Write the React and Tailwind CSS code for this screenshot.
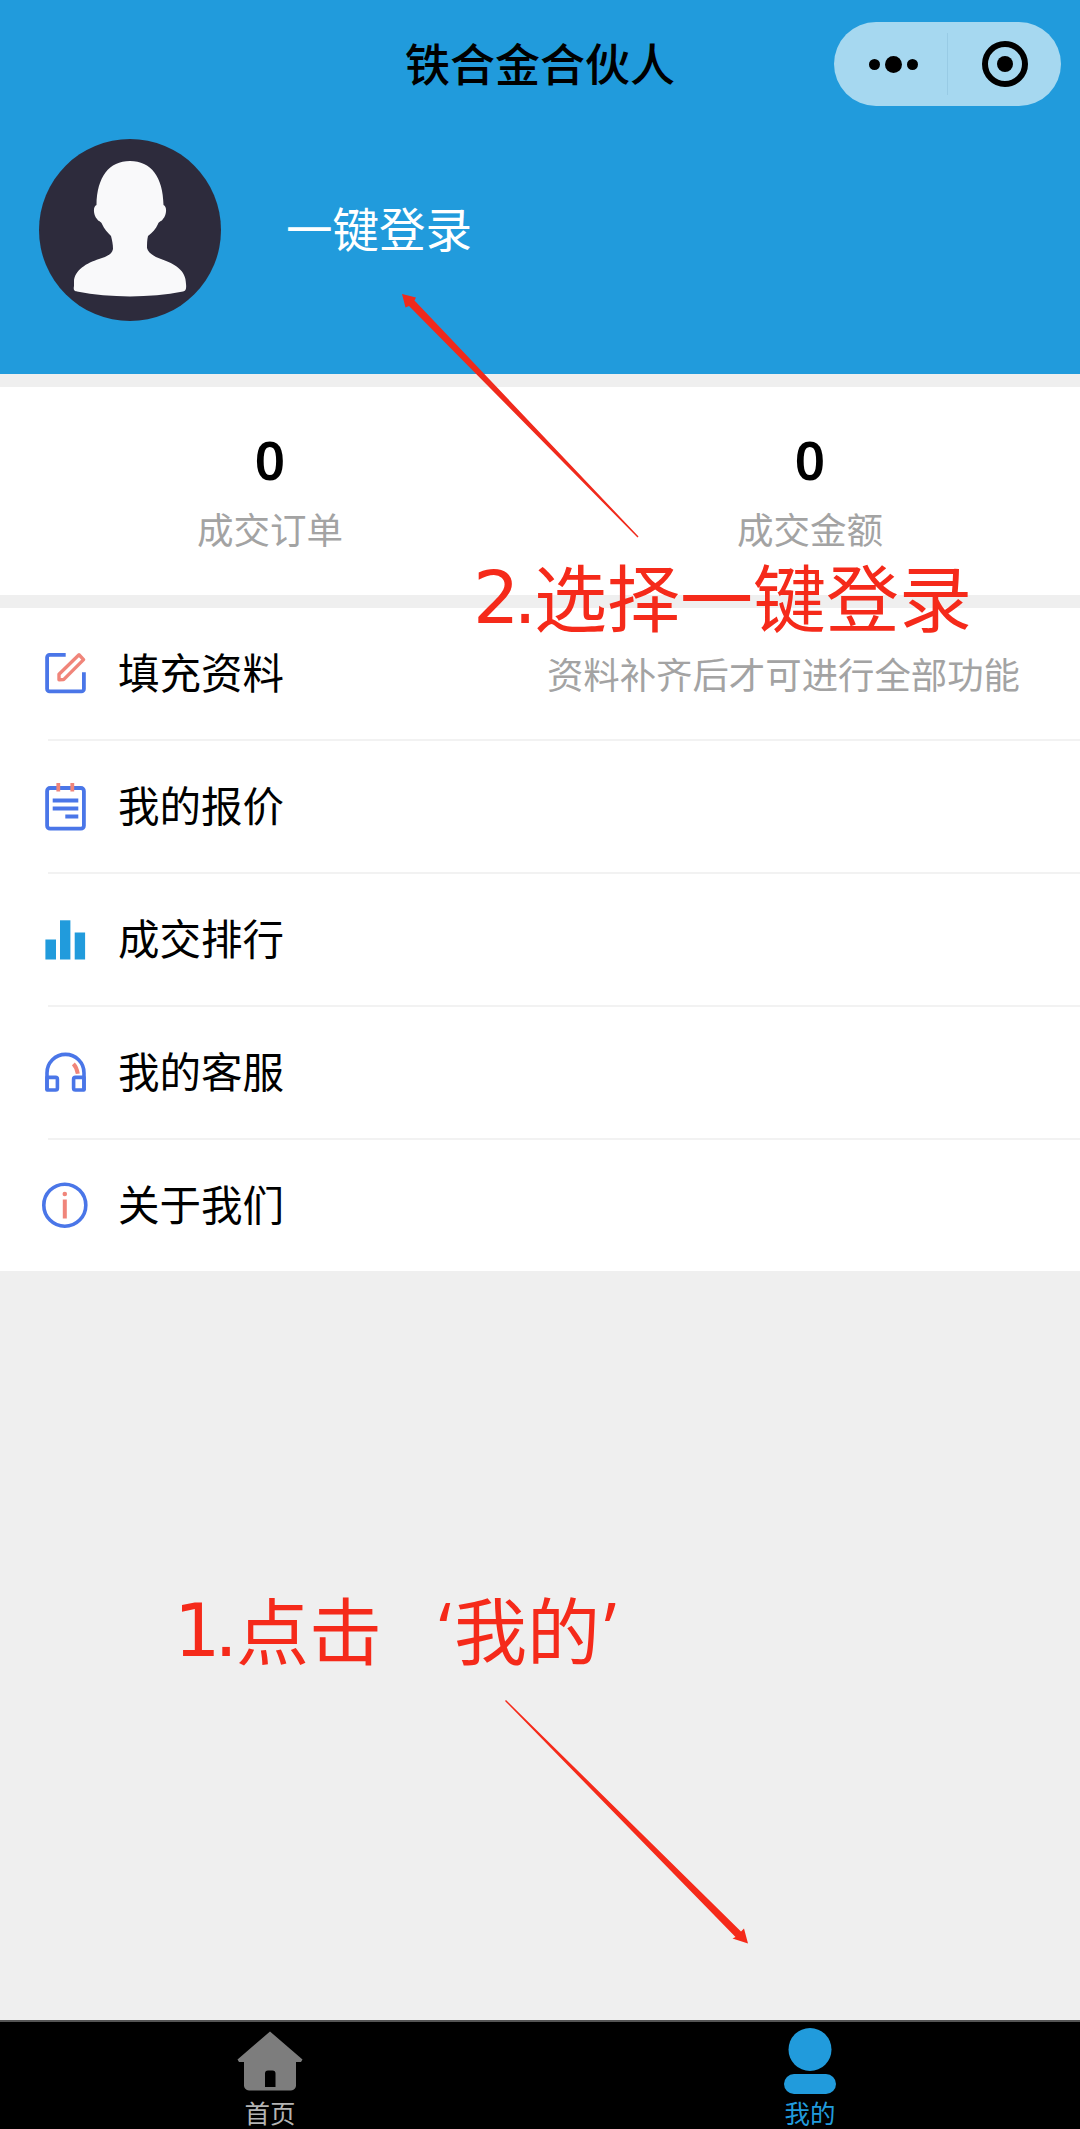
const stats = [
  { label: "成交订单", value: 0 },
  { label: "成交金额", value: 0 },
];

const BLUE = "#4a76e8";
const CORAL = "#f0857a";

function EditIcon() {
  return (
    <svg width="48" height="48" viewBox="0 0 48 48" fill="none" strokeWidth="3.8" strokeLinejoin="round">
      <path d="M24.7 4.8H8.6a2.5 2.5 0 0 0-2.5 2.5v31.6a2.5 2.5 0 0 0 2.5 2.5h31.8a2.5 2.5 0 0 0 2.5-2.5V22.2" stroke={BLUE} />
      <path d="M18 29.7v-5.4L38 4.8l4.6 4.8-20 20z" stroke={CORAL} strokeWidth="3.4" />
    </svg>
  );
}

function QuoteIcon() {
  return (
    <svg width="48" height="48" viewBox="0 0 48 48" fill="none" strokeWidth="3.8">
      <rect x="6.1" y="5" width="36.8" height="40.7" rx="3" stroke={BLUE} />
      <path d="M11.7 17.5h25.6M11.7 25.5h25.6M24.3 33.5h13" stroke={BLUE} />
      <path d="M17.3 0v8.5M31.3 0v8.5" stroke={CORAL} />
    </svg>
  );
}

function RankIcon() {
  return (
    <svg width="48" height="48" viewBox="0 0 48 48" fill="#219bdc">
      <rect x="4.4" y="23.5" width="10.6" height="20" />
      <rect x="19" y="4.3" width="10.4" height="39.2" />
      <rect x="33.7" y="16.5" width="10.4" height="27" />
    </svg>
  );
}

function ServiceIcon() {
  return (
    <svg width="48" height="48" viewBox="0 0 48 48" fill="none" strokeWidth="3.6" strokeLinejoin="round">
      <path d="M6 41V23.9a18.5 18.5 0 0 1 37 0V41" stroke={BLUE} />
      <path d="M6 28.4h8.6a1.8 1.8 0 0 1 1.8 1.8v9a1.8 1.8 0 0 1-1.8 1.8H6z" stroke={BLUE} />
      <path d="M43 28.4h-8.6a1.8 1.8 0 0 0-1.8 1.8v9a1.8 1.8 0 0 0 1.8 1.8H43z" stroke={BLUE} />
      <path d="M32.4 14.8q3.4 3.6 4.4 10" stroke={CORAL} strokeWidth="4" />
    </svg>
  );
}

function InfoIcon() {
  return (
    <svg width="48" height="48" viewBox="0 0 48 48" fill="none">
      <circle cx="23.8" cy="23.2" r="21" stroke={BLUE} strokeWidth="3.6" />
      <circle cx="23.8" cy="12" r="2.3" fill={CORAL} />
      <path d="M23.8 17.5v19" stroke={CORAL} strokeWidth="4" />
    </svg>
  );
}

const menu = [
  { label: "填充资料", Icon: EditIcon, hint: "资料补齐后才可进行全部功能" },
  { label: "我的报价", Icon: QuoteIcon },
  { label: "成交排行", Icon: RankIcon },
  { label: "我的客服", Icon: ServiceIcon },
  { label: "关于我们", Icon: InfoIcon },
];

function Capsule() {
  return (
    <div className="absolute left-[834px] top-[22px] flex h-[84px] w-[227px] items-center rounded-full bg-[#a6d8f0]">
      <div className="flex w-[113px] items-center justify-center gap-[5px] pl-[6px]">
        <span className="h-[11px] w-[11px] rounded-full bg-black" />
        <span className="h-[17px] w-[17px] rounded-full bg-black" />
        <span className="h-[11px] w-[11px] rounded-full bg-black" />
      </div>
      <div className="h-[62px] w-[1px] bg-[#98cbe5]" />
      <div className="flex flex-1 justify-center">
        <div className="flex h-[46px] w-[46px] items-center justify-center rounded-full border-[6px] border-black">
          <span className="h-4 w-4 rounded-full bg-black" />
        </div>
      </div>
    </div>
  );
}

function Avatar() {
  return (
    <svg width="182" height="182" viewBox="0 0 182 182">
      <circle cx="91" cy="91" r="91" fill="#2d2b3c" />
      <path
        d="M91 22C70 22 58 38 57.500 66C54 67 54 76 58 80C60 83 62 82 63 85C65 90 69 94 72 97C73 101 74 105 74 110C73 116 66 118 60 120C48 124 35 131 35 143V147C34 152 36 152 38 152.500C72 159 110 159 144 152.500C147 152 147.500 149 147 145C147 131 136 125 122 120C116 118 109 114 108 109C108 105 108 101 109 97C113 94 117 90 119 85C120 82 122 83 124 80C128 76 128 67 124.500 66C124 38 112 22 91 22Z"
        fill="#f9f9fa"
      />
    </svg>
  );
}

/* ---------------- TAB ICONS ---------------- */

function HomeIcon() {
  return (
    <svg width="66" height="60" viewBox="0 0 66 60" fill="#7d7d7d">
      <path
        fillRule="evenodd"
        d="M33 0.500 65.500 28.500 64 31H59V54a5 5 0 0 1-5 5.500H12a5 5 0 0 1-5-5.500V31H2L.5 28.500ZM31 39.500a3 3 0 0 0-3 3V56H38.500V42.500a3 3 0 0 0-3-3Z"
      />
    </svg>
  );
}

function MineIcon() {
  return (
    <svg width="54" height="67" viewBox="0 0 54 67" fill="#219bdc">
      <circle cx="27" cy="21.500" r="21.500" />
      <rect x="1" y="46" width="52" height="20" rx="10" />
    </svg>
  );
}

export default function App() {
  return (
    <div className="relative flex h-[2129px] w-[1080px] flex-col overflow-hidden bg-[#efefef] font-['Noto_Sans_CJK_SC',sans-serif] text-black">
      {/* HEADER */}
      <header className="relative flex h-[374px] flex-col bg-[#219bdc]">
        <h1 className="flex h-[125px] items-center justify-center text-[45px] font-medium leading-none">
          铁合金合伙人
        </h1>
        <Capsule />
        <div className="mt-[14px] flex items-center pl-[39px]">
          <Avatar />
          <span className="ml-[65px] pb-[5px] text-[46.500px] leading-none text-white">一键登录</span>
        </div>
      </header>

      {/* STATS */}
      <section className="mt-[13px] grid h-[208px] grid-cols-2 bg-white">
        {stats.map((item) => (
          <div key={item.label} className="flex flex-col items-center pt-[43px]">
            <span className="font-['Noto_Sans',sans-serif] text-[53px] font-semibold leading-[60px]">{item.value}</span>
            <span className="mt-[19px] text-[36.5px] leading-[40px] text-[#a3a3a3]">{item.label}</span>
          </div>
        ))}
      </section>

      {/* MENU */}
      <ul className="mt-[13px] bg-white">
        {menu.map(({ label, Icon, hint }, index) => (
          <li key={label}>
            <div className="flex h-[131px] items-center pl-[41px] pr-[60px]">
              <Icon />
              <span className="ml-[29px] pb-[4px] text-[41.500px] leading-none">{label}</span>
              {hint ? (
                <span className="ml-auto text-[36.400px] leading-none text-[#a3a3a3]">{hint}</span>
              ) : null}
            </div>
            {index < menu.length - 1 ? <div className="ml-[48px] h-[2px] bg-[#f2f2f2]" /> : null}
          </li>
        ))}
      </ul>

      {/* TAB BAR */}
      <nav className="mt-auto grid h-[109px] grid-cols-2 border-t-2 border-[#555] bg-black text-[25.500px] leading-[28px]">
        <div className="flex flex-col items-center justify-between pb-[3px] pt-[9px] text-[#b4b4b4]">
          <HomeIcon />
          <span>首页</span>
        </div>
        <div className="flex flex-col items-center justify-between pb-[3px] pt-[6px] text-[#219bdc]">
          <MineIcon />
          <span>我的</span>
        </div>
      </nav>

      {/* STEP NOTES */}
      <p className="absolute left-[473px] top-[552px] flex whitespace-nowrap text-[73px] leading-[84px] text-[#f52a1a]">
        <span className="w-[61px] pt-[4px] font-['DejaVu_Sans',sans-serif] tracking-[-6px]">2.</span>
        <span>选择一键登录</span>
      </p>
      <p className="absolute left-[174px] top-[1585px] flex whitespace-nowrap text-[73px] leading-[84px] text-[#f52a1a]">
        <span className="w-[62px] pt-[4px] font-['DejaVu_Sans',sans-serif] tracking-[-6px]">1.</span>
        <span>点击</span>
        <span className="w-[72px] pr-[3px] text-right font-['Open_Sans',sans-serif]">‘</span>
        <span>我的</span>
        <span className="pl-[4px] font-['Open_Sans',sans-serif]">’</span>
      </p>
      <svg className="absolute left-[400px] top-[292px]" width="242" height="248" viewBox="400 292 242 248" fill="#f02a1c">
        <path d="M402 294 416 297.500 414.500 300.500 638.500 536.500 637.500 537.500 409 306 405.500 307.500Z" />
      </svg>
      <svg className="absolute left-[503px] top-[1698px]" width="248" height="248" viewBox="503 1698 248 248" fill="#f52a1a">
        <path d="M748 1943.500 744 1928.500 741 1931.500 506 1700 505 1701 735.500 1937 732.500 1938.500Z" />
      </svg>
    </div>
  );
}
